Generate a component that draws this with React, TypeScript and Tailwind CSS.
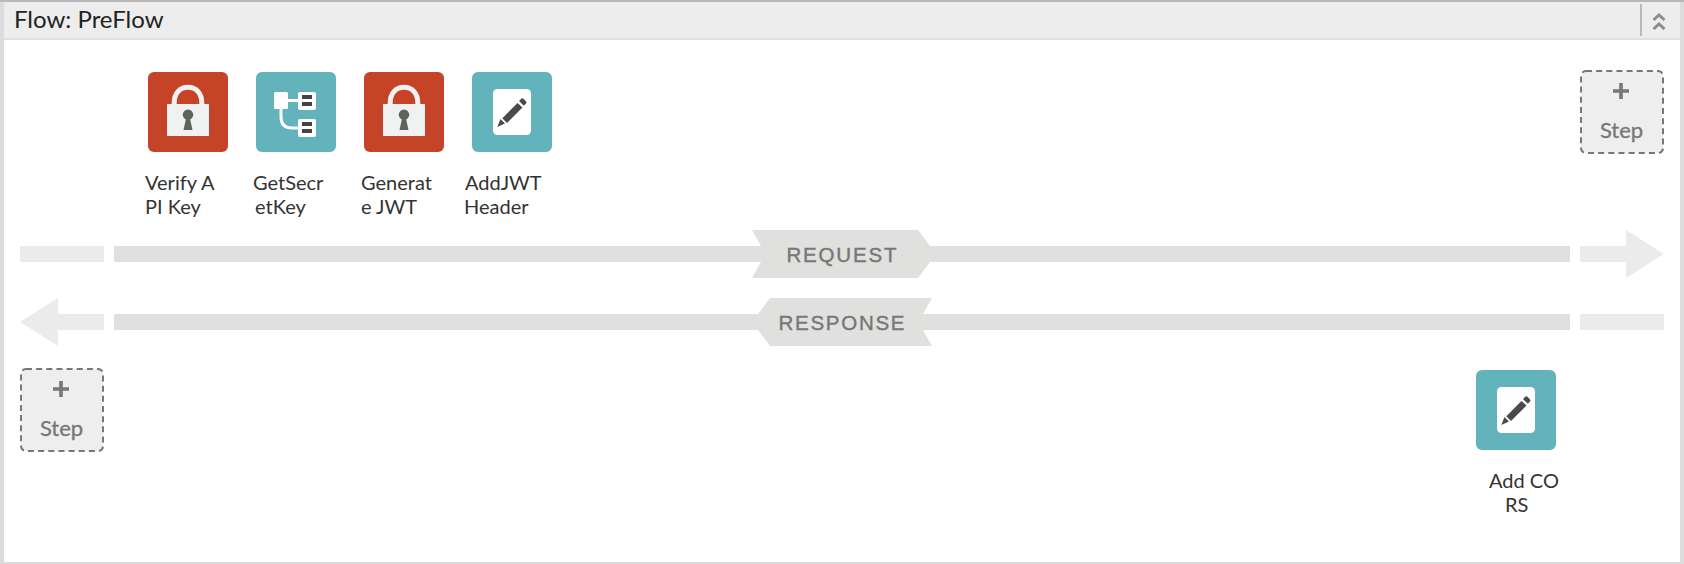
import React from "react";

type IconKind = "lock" | "callout" | "edit";

function PolicyIcon({ kind }: { kind: IconKind }) {
  if (kind === "lock") {
    return (
      <svg width="80" height="80" viewBox="0 0 80 80" className="block rounded-md bg-[#c54326]">
        <path d="M26.2 34V31C26.2 21 32 15.300 40 15.300S53.800 21 53.800 31V34" fill="none" stroke="#f0f2f1" strokeWidth="5" />
        <rect x="19" y="32" width="42" height="32" fill="#f0f2f1" />
        <path d="M35.500 58L37.800 47.500A5.200 5.200 0 1 1 42.200 47.500L44.500 58Z" fill="#5f645b" />
      </svg>
    );
  }
  if (kind === "callout") {
    return (
      <svg width="80" height="80" viewBox="0 0 80 80" className="block rounded-md bg-[#62b3bc]">
        <path d="M30 28.500H44M25 36V45Q25 56 36 56H44" fill="none" stroke="#fff" strokeWidth="3" />
        <rect x="18" y="20" width="14" height="17" rx="1.500" fill="#fff" />
        <rect x="42" y="20" width="18" height="18" rx="2" fill="#fff" />
        <rect x="42" y="47" width="18" height="18" rx="2" fill="#fff" />
        <path d="M46 23H56V27H46ZM46 30H56V34H46ZM46 50H56V54H46ZM46 57H56V61H46Z" fill="#444" />
      </svg>
    );
  }
  return (
    <svg width="80" height="80" viewBox="0 0 80 80" className="block rounded-md bg-[#62b3bc]">
      <rect x="21" y="17" width="38" height="46" rx="4.500" fill="#fff" />
      <g fill="#4a4a4a">
        <path d="M25.300 55L28.500 47L33 51.500Z" />
        <path d="M30.300 46.300L45.500 31L50.500 35.500L35 51Z" />
        <path d="M47 29L49.500 26.500Q50.500 25.800 51.500 26.700L54 29.500Q55 30.500 54 31.500L51.800 33.700Z" />
      </g>
    </svg>
  );
}

function PolicyLabel({ lines }: { lines: [string, string][] }) {
  return (
    <div className="mt-[18px] text-[20px] leading-6 text-[#333]">
      {lines.map(([text, indent]) => (
        <div key={text} className={"whitespace-pre " + indent}>{text}</div>
      ))}
    </div>
  );
}

function Policy({ kind, lines }: { kind: IconKind; lines: [string, string][] }) {
  return (
    <div className="w-20 shrink-0">
      <PolicyIcon kind={kind} />
      <PolicyLabel lines={lines} />
    </div>
  );
}

function StepButton() {
  return (
    <button className="block h-[84px] w-[84px] shrink-0">
      <svg width="84" height="84" viewBox="0 0 84 84">
        <rect x="1" y="1" width="82" height="82" rx="5" fill="#eee" stroke="#777" strokeWidth="2" strokeDasharray="6 4.150" />
        <path d="M33 21H49M41 13V29" stroke="#777" strokeWidth="3.600" />
        <text x="41.500" y="68" textAnchor="middle" fontSize="22" fill="#777" stroke="#777" strokeWidth=".3">Step</text>
      </svg>
    </button>
  );
}

function RequestLane() {
  return (
    <svg width="1644" height="48" viewBox="0 0 1644 48" className="block">
      <path d="M0 16H84V32H0ZM1560 16H1606V0L1644 24L1606 48V32H1560Z" fill="#ebebeb" />
      <path d="M94 16H741L732 0H898L910 16H1550V32H910L898 48H732L741 32H94Z" fill="#e0e0de" />
      <text x="766.500" y="32" fontFamily="Liberation Sans, sans-serif" fontSize="20.500" textLength="110" fill="#777" stroke="#777" strokeWidth=".4">REQUEST</text>
    </svg>
  );
}

function ResponseLane() {
  return (
    <svg width="1644" height="48" viewBox="0 0 1644 48" className="block">
      <path d="M0 24L38 0V16H84V32H38V48ZM1560 16H1644V32H1560Z" fill="#ebebeb" />
      <path d="M94 16H738L750 0H912L903 16H1550V32H903L912 48H750L738 32H94Z" fill="#e0e0de" />
      <text x="758.500" y="32" fontFamily="Liberation Sans, sans-serif" fontSize="20.500" textLength="126" fill="#777" stroke="#777" strokeWidth=".4">RESPONSE</text>
    </svg>
  );
}

export default function App() {
  return (
    <div className="flex h-[564px] w-[1684px] flex-col border-b-2 border-[#dcdcdc] bg-white font-['Lato',sans-serif]">
      <div className="h-0.5 shrink-0 bg-[#b8b8b8]" />
      <div className="flex flex-1 flex-col border-x-4 border-[#dcdcdc]">
        <header className="flex h-[38px] shrink-0 items-center justify-between border-b-2 border-[#e0e0e0] bg-[#ededed]">
          <h1 className="pb-0.5 pl-2.5 text-[24px] leading-8 text-[#222]">Flow: PreFlow</h1>
          <button className="flex h-8 w-10 items-center border-l-2 border-[#b3bbc0] pl-[10px] pt-0.5">
            <svg width="14" height="18" viewBox="0 0 14 18" fill="none" stroke="#8c8c8c" strokeWidth="3">
              <path d="M1.500 8L7 3L12.500 8M1.500 17L7 12L12.500 17" />
            </svg>
          </button>
        </header>

        <main className="flex flex-col px-4">
          <section className="flex h-[190px] items-start justify-between pl-32 pt-[30px]">
            <div className="flex gap-7 pt-0.5">
              <Policy kind="lock" lines={[["Verify A", "-ml-[3px]"], ["PI Key", "-ml-[3px]"]]} />
              <Policy kind="callout" lines={[["GetSecr", "-ml-[3px]"], ["etKey", "-ml-[1px]"]]} />
              <Policy kind="lock" lines={[["Generat", "-ml-[3px]"], ["e JWT", "-ml-[3px]"]]} />
              <Policy kind="edit" lines={[["AddJWT", "-ml-[7px]"], ["Header", "-ml-[8px]"]]} />
            </div>
            <StepButton />
          </section>

          <section className="flex flex-col gap-5">
            <RequestLane />
            <ResponseLane />
          </section>

          <section className="flex items-start justify-between pr-[108px] pt-[22px]">
            <StepButton />
            <div className="pt-0.5">
              <Policy kind="edit" lines={[["Add CO", "ml-[13px]"], ["RS", "ml-[29px]"]]} />
            </div>
          </section>
        </main>
      </div>
    </div>
  );
}
